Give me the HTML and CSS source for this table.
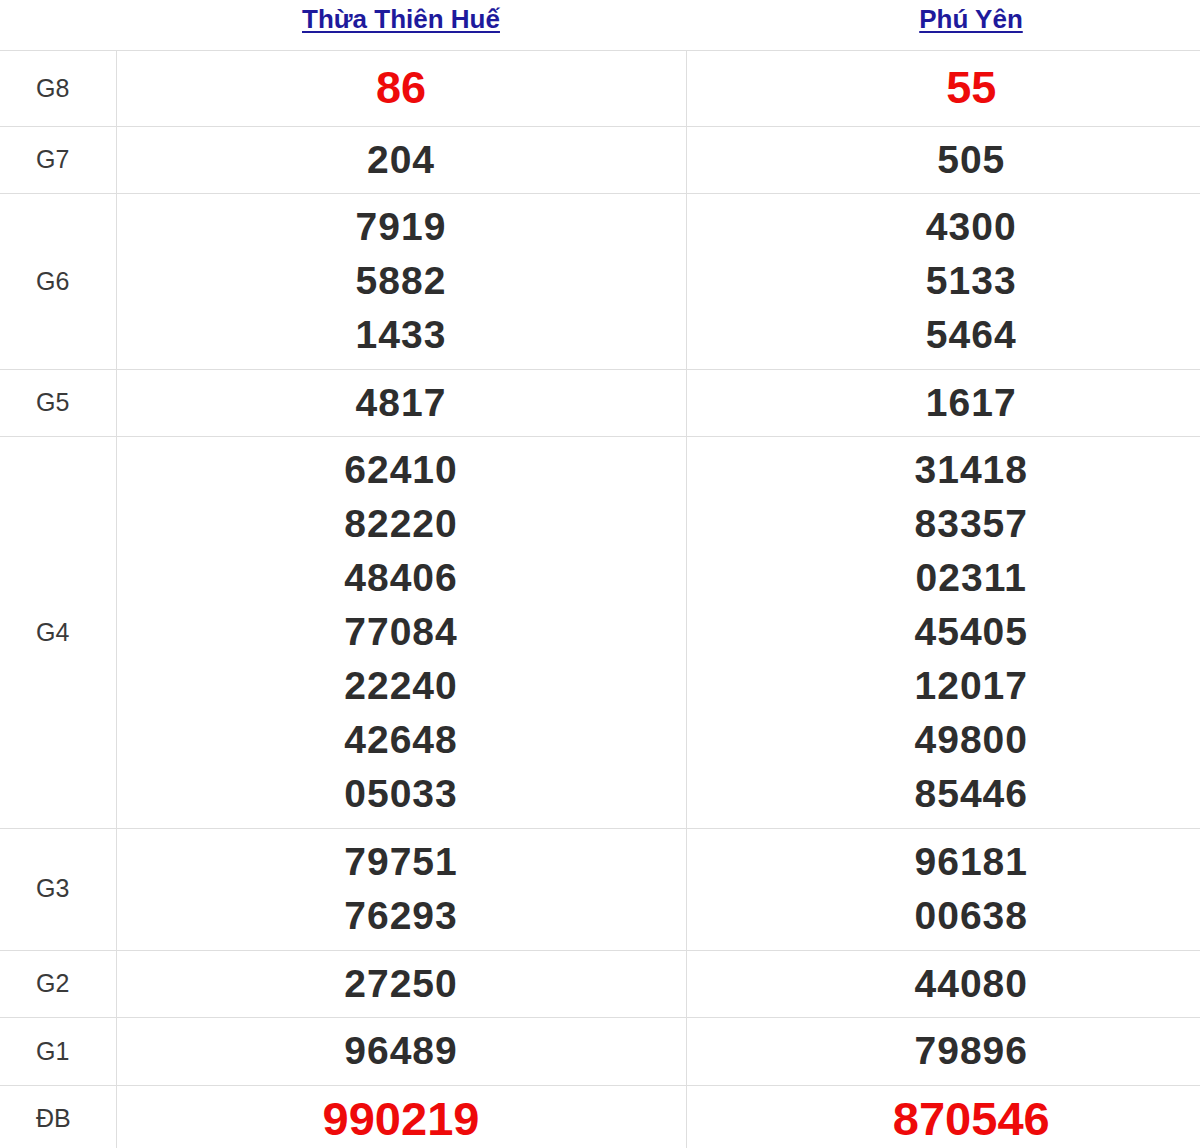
FILE: index.html
```html
<!DOCTYPE html>
<html lang="vi">
<head>
<meta charset="utf-8">
<title>Kết quả xổ số</title>
<link rel="stylesheet" href="styles.css">
</head>
<body>
<table class="kq">
  <colgroup>
    <col class="c-label">
    <col class="c-prov">
    <col class="c-prov">
  </colgroup>
  <thead>
    <tr>
      <th class="h-empty"></th>
      <th class="h-prov"><a href="#">Thừa Thiên Huế</a></th>
      <th class="h-prov"><a href="#">Phú Yên</a></th>
    </tr>
  </thead>
  <tbody>
    <tr class="r-g8">
      <td class="lbl">G8</td>
      <td class="num red"><div>86</div></td>
      <td class="num red"><div>55</div></td>
    </tr>
    <tr>
      <td class="lbl">G7</td>
      <td class="num"><div>204</div></td>
      <td class="num"><div>505</div></td>
    </tr>
    <tr>
      <td class="lbl">G6</td>
      <td class="num"><div>7919</div><div>5882</div><div>1433</div></td>
      <td class="num"><div>4300</div><div>5133</div><div>5464</div></td>
    </tr>
    <tr>
      <td class="lbl">G5</td>
      <td class="num"><div>4817</div></td>
      <td class="num"><div>1617</div></td>
    </tr>
    <tr>
      <td class="lbl">G4</td>
      <td class="num"><div>62410</div><div>82220</div><div>48406</div><div>77084</div><div>22240</div><div>42648</div><div>05033</div></td>
      <td class="num"><div>31418</div><div>83357</div><div>02311</div><div>45405</div><div>12017</div><div>49800</div><div>85446</div></td>
    </tr>
    <tr>
      <td class="lbl">G3</td>
      <td class="num"><div>79751</div><div>76293</div></td>
      <td class="num"><div>96181</div><div>00638</div></td>
    </tr>
    <tr>
      <td class="lbl">G2</td>
      <td class="num"><div>27250</div></td>
      <td class="num"><div>44080</div></td>
    </tr>
    <tr>
      <td class="lbl">G1</td>
      <td class="num"><div>96489</div></td>
      <td class="num"><div>79896</div></td>
    </tr>
    <tr class="r-db">
      <td class="lbl">ĐB</td>
      <td class="num red big"><div>990219</div></td>
      <td class="num red big"><div>870546</div></td>
    </tr>
  </tbody>
</table>
</body>
</html>
```

FILE: styles.css
```css
html, body {
  margin: 0;
  padding: 0;
  background: #ffffff;
  overflow: hidden;
}

body {
  font-family: "Liberation Sans", Arial, sans-serif;
  color: #333333;
}

.kq {
  border-collapse: collapse;
  table-layout: fixed;
  width: 1256px;
}

.c-label { width: 116px; }
.c-prov { width: 570px; }

.kq th {
  height: 50px;
  padding: 0;
  vertical-align: top;
  border-bottom: 1px solid #dedede;
  font-weight: bold;
  font-size: 26px;
  line-height: 38px;
  text-align: center;
}

.kq th a {
  color: #1e1a9c;
  text-decoration: underline;
  text-underline-offset: 3px;
}

.kq td {
  border-bottom: 1px solid #dedede;
  border-right: 1px solid #dedede;
  padding: 6px 0 6.6px 0;
  vertical-align: middle;
}

.kq td:last-child {
  border-right: none;
}

.lbl {
  font-size: 25px;
  color: #3a3a3a;
  text-align: left;
  padding-left: 36px !important;
}

.num {
  text-align: center;
  font-weight: bold;
  font-size: 39px;
  line-height: 54px;
  color: #2e2e2e;
  letter-spacing: 1px;
}

.num.red {
  color: #ee0a0a;
  font-size: 45px;
  letter-spacing: 0;
}

.r-g8 .num {
  line-height: 62px;
}

.num.big {
  font-size: 47px;
  line-height: 54px;
}
```
